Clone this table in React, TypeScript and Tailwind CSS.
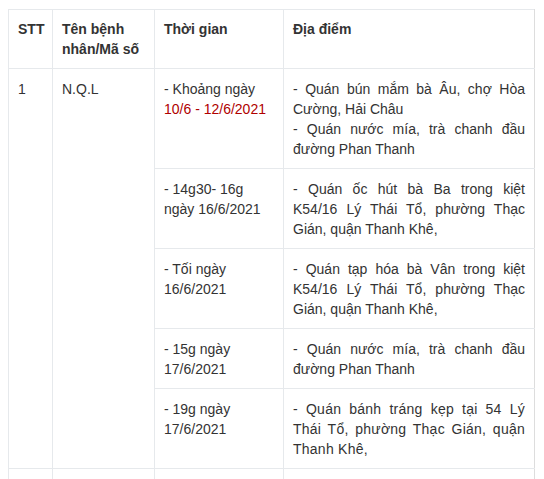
import React from 'react';

const rows = [
  {
    time: (
      <>
        - Khoảng ngày <span className="text-[#b00000]">10/6 - 12/6/2021</span>
      </>
    ),
    place: ['- Quán bún mắm bà Âu, chợ Hòa Cường, Hải Châu', '- Quán nước mía, trà chanh đầu đường Phan Thanh'],
  },
  {
    time: '- 14g30- 16g ngày 16/6/2021',
    place: ['- Quán ốc hút bà Ba trong kiệt K54/16 Lý Thái Tổ, phường Thạc Gián, quận Thanh Khê,'],
  },
  {
    time: '- Tối ngày 16/6/2021',
    place: ['- Quán tạp hóa bà Vân trong kiệt K54/16 Lý Thái Tổ, phường Thạc Gián, quận Thanh Khê,'],
  },
  {
    time: '- 15g ngày 17/6/2021',
    place: ['- Quán nước mía, trà chanh đầu đường Phan Thanh'],
  },
  {
    time: '- 19g ngày 17/6/2021',
    place: ['- Quán bánh tráng kẹp tại 54 Lý Thái Tổ, phường Thạc Gián, quận Thanh Khê,'],
    tight: true,
  },
];

const cell = 'border border-[#e6e9ec] pl-[9px] pr-[9px] pt-[10px] pb-[9px] align-top';

const App = () => {
  return (
    <div className="bg-white min-h-screen pt-[9px] pl-[8px] text-[14px] leading-[20px] text-[#333333]" style={{ fontFamily: '"Liberation Sans", Arial, sans-serif' }}>
      {/* Patient table */}
      <table className="table-fixed border-collapse w-[526px]">
        <colgroup>
          <col className="w-[44px]" />
          <col className="w-[102px]" />
          <col className="w-[129px]" />
          <col className="w-[251px]" />
        </colgroup>
        <thead>
          <tr>
            <th className="border border-[#e6e9ec] px-[9px] py-[9px] align-top text-left font-bold">STT</th>
            <th className="border border-[#e6e9ec] px-[9px] py-[9px] align-top text-left font-bold">Tên bệnh nhân/Mã số</th>
            <th className="border border-[#e6e9ec] px-[9px] py-[9px] align-top text-left font-bold">Thời gian</th>
            <th className="border border-[#e6e9ec] border-r-[#dddddd] px-[9px] py-[9px] align-top text-left font-bold">Địa điểm</th>
          </tr>
        </thead>
        <tbody>
          {rows.map((r, i) => (
            <tr key={i}>
              {i === 0 && (
                <>
                  <td rowSpan={5} className={cell}>1</td>
                  <td rowSpan={5} className={cell}>N.Q.L</td>
                </>
              )}
              <td className={cell}>{r.time}</td>
              <td className={cell + ' border-r-[#dddddd] text-justify'}>
                {r.place.map((p, j) => (
                  <div key={j} className={r.tight ? 'tracking-[0.25px]' : ''}>{p}</div>
                ))}
              </td>
            </tr>
          ))}
          <tr>
            <td className={cell}>&nbsp;</td>
            <td className={cell}>&nbsp;</td>
            <td className={cell}>&nbsp;</td>
            <td className={cell + ' border-r-[#dddddd]'}>&nbsp;</td>
          </tr>
        </tbody>
      </table>
    </div>
  );
};

export default App;
